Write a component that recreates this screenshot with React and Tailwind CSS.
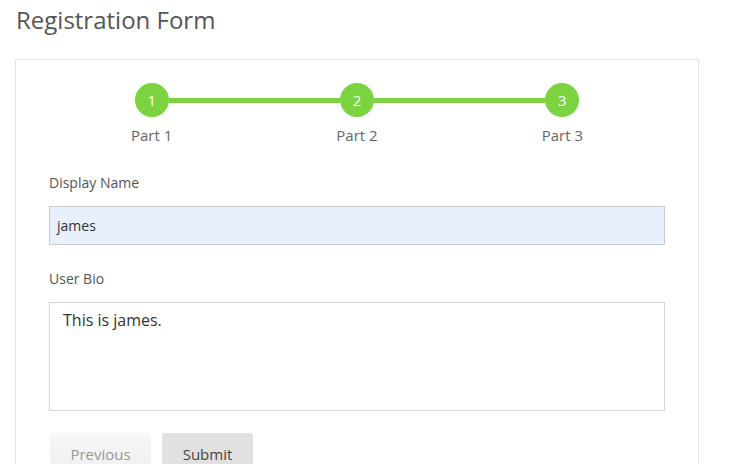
import React from 'react';

const steps = ['Part 1', 'Part 2', 'Part 3'];

const Stepper = () => (
  <div className="grid grid-cols-3">
    {steps.map((label, i) => (
      <div key={label} className="flex flex-col items-center">
        <div className="flex items-center w-full">
          <div className={`flex-1 h-[5px] ${i === 0 ? 'bg-transparent' : 'bg-[#7bd33f]'}`} />
          <div className="w-[34px] h-[34px] rounded-full bg-[#7bd33f] text-white text-[15px] flex items-center justify-center shrink-0">
            {i + 1}
          </div>
          <div className={`flex-1 h-[5px] ${i === steps.length - 1 ? 'bg-transparent' : 'bg-[#7bd33f]'}`} />
        </div>
        <div className="mt-[8px] text-[15px] leading-5 text-[#666]">{label}</div>
      </div>
    ))}
  </div>
);

const App = () => {
  return (
    <div className="w-[749px] h-[464px] overflow-hidden bg-white font-['Open_Sans',sans-serif]">
      <h1 className="pl-[16px] pt-[5px] text-[24px] leading-[30px] text-[#555]">Registration Form</h1>
      <div className="ml-[15px] mt-[24px] w-[684px] h-[420px] border border-[#e3e3e3] px-[33px] pt-[23px]">
        <Stepper />
        <div className="mt-[28px] text-[14px] leading-5 text-[#555]">Display Name</div>
        <div className="mt-[13px] h-[39px] border border-[#c9cdd3] bg-[#e8f0fe] px-[7px] flex items-center text-[14px] text-[#333]">
          james
        </div>
        <div className="mt-[24px] text-[14px] leading-5 text-[#555]">User Bio</div>
        <div className="mt-[13px] h-[109px] border border-[#d6d6d6] pl-[13px] pt-[5px] text-[16px] leading-6 text-[#333]">
          This is james.
        </div>
        <div className="mt-[22px] flex gap-[11px] pl-[1px]">
          <button className="w-[101px] h-[40px] rounded-t-[3px] bg-gradient-to-b from-[#f7f7f7] to-[#efefef] text-[15px] leading-5 text-[#999] flex items-start justify-center pt-[11px]">
            Previous
          </button>
          <button className="w-[91px] h-[40px] rounded-t-[3px] bg-[#e1e1e1] text-[15px] leading-5 text-[#444] flex items-start justify-center pt-[11px]">
            Submit
          </button>
        </div>
      </div>
    </div>
  );
};

export default App;
